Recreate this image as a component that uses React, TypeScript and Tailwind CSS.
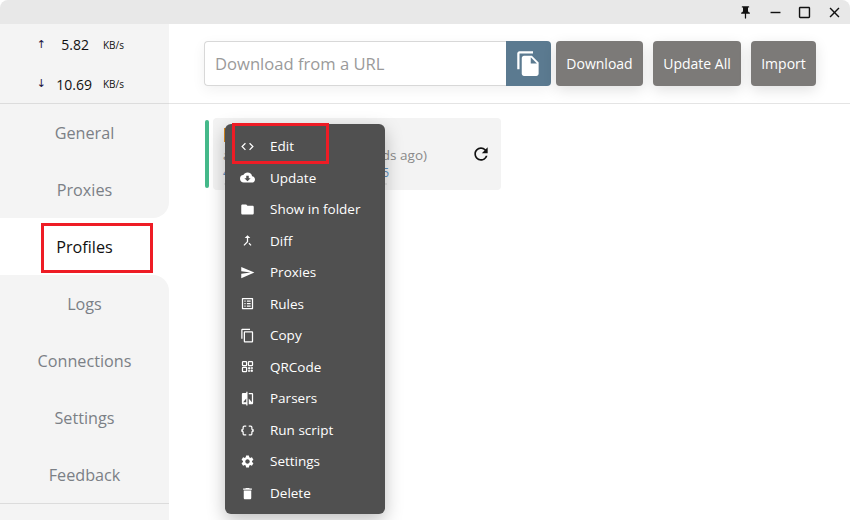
import React from 'react';
import {
  MdCode,
  MdCloudDownload,
  MdFolder,
  MdCallMerge,
  MdSend,
  MdOutlineListAlt,
  MdContentCopy,
  MdCompare,
  MdDataObject,
  MdSettings,
  MdDelete,
  MdPushPin,
  MdRefresh,
  MdFileCopy,
  MdClose,
  MdCropSquare,
  MdRemove,
} from 'react-icons/md';

const QrIcon = ({ size = 15 }: { size?: number }) => (
  <svg width={size} height={size} viewBox="0 0 24 24" fill="none" stroke="currentColor" strokeWidth="2">
    <rect x="4" y="4" width="6.5" height="6.5" rx="1" />
    <rect x="13.5" y="4" width="6.5" height="6.5" rx="1" />
    <rect x="4" y="13.5" width="6.5" height="6.5" rx="1" />
    <path d="M13.5 13.5h2.5v2.5h-2.5zM18 13.5h2v2h-2zM13.5 18h2v2h-2zM17.5 17.5h2.5v2.5h-2.5z" strokeWidth="1" fill="currentColor" />
  </svg>
);

const menuItems = [
  { label: 'Edit', icon: MdCode },
  { label: 'Update', icon: MdCloudDownload },
  { label: 'Show in folder', icon: MdFolder },
  { label: 'Diff', icon: MdCallMerge },
  { label: 'Proxies', icon: MdSend },
  { label: 'Rules', icon: MdOutlineListAlt },
  { label: 'Copy', icon: MdContentCopy },
  { label: 'QRCode', icon: QrIcon },
  { label: 'Parsers', icon: MdCompare },
  { label: 'Run script', icon: MdDataObject },
  { label: 'Settings', icon: MdSettings },
  { label: 'Delete', icon: MdDelete },
];

const navItems = ['General', 'Proxies', 'Profiles', 'Logs', 'Connections', 'Settings', 'Feedback'];

const Sidebar = () => (
  <aside className="flex w-[169px] shrink-0 flex-col bg-white">
    <div className="flex h-[80px] flex-col border-b border-[#dcdcdc] bg-[#f4f4f4] text-[#111]">
      <div className="flex h-[40px] items-center pt-[2px]">
        <span className="w-[46px] text-right font-['DejaVu_Sans'] text-[11px] text-[#1a1440]">↑</span>
        <span className="w-[43px] text-right text-[14px]">5.82</span>
        <span className="ml-[14px] pt-[1px] text-[10px]">KB/s</span>
      </div>
      <div className="flex h-[40px] items-center pt-[2px]">
        <span className="w-[46px] text-right font-['DejaVu_Sans'] text-[11px] text-[#1a1440]">↓</span>
        <span className="w-[46px] text-right text-[14px]">10.69</span>
        <span className="ml-[11px] pt-[1px] text-[10px]">KB/s</span>
      </div>
    </div>
    <nav className="flex flex-col">
      {navItems.map((item) => {
        const active = item === 'Profiles';
        return (
          <div
            key={item}
            className={`flex h-[57px] items-center justify-center pt-[1px] text-[16.2px] ${
              active ? 'bg-white text-[#111]' : 'bg-[#f4f4f4] text-[#7b8086]'
            } ${item === 'Proxies' ? 'rounded-br-2xl' : ''} ${item === 'Logs' ? 'rounded-tr-2xl' : ''}`}
          >
            {item}
          </div>
        );
      })}
    </nav>
    <div className="flex-1 border-t border-[#dcdcdc] bg-[#f4f4f4]" />
  </aside>
);

const Toolbar = () => (
  <div className="flex h-[80px] items-start border-b border-[#e4e4e4] pl-[35px] pt-[17px]">
    <div className="flex h-[45px] w-[347px] rounded shadow-[0_4px_14px_rgba(0,0,0,0.06)]">
      <div className="flex flex-1 items-center rounded-l border border-r-0 border-[#d8d8d8] pl-[10px] pt-[1px] text-[16.6px] text-[#9a9a9a]">
        Download from a URL
      </div>
      <div className="flex w-[45px] items-center justify-center rounded-r bg-[#5b7a90] text-white">
        <MdFileCopy size={27} />
      </div>
    </div>
    {[
      { label: 'Download', w: 'w-[87px]', ml: 'ml-[5px]' },
      { label: 'Update All', w: 'w-[88px]', ml: 'ml-[10px]' },
      { label: 'Import', w: 'w-[65px]', ml: 'ml-[10px]' },
    ].map((b) => (
      <div
        key={b.label}
        className={`flex h-[45px] items-center justify-center rounded bg-[#7c7a78] text-[14px] text-white shadow-[0_4px_14px_rgba(0,0,0,0.12)] ${b.w} ${b.ml}`}
      >
        {b.label}
      </div>
    ))}
  </div>
);

const ProfileCard = () => (
  <div className="flex pl-[36px] pt-[14px]">
    <div className="mt-[2px] h-[68px] w-[4px] rounded-sm bg-[#45b98a]" />
    <div className="relative ml-[4px] h-[72px] w-[288px] rounded bg-[#f3f3f3]">
      <div className="ml-[11px] mt-[10px] h-[14px] w-[8px] bg-[#d98a1f]" />
      <div className="ml-[10px] mt-[3px] flex w-[204px] justify-between whitespace-nowrap text-[13.5px] text-[#8a8a8a]">
        <span>a</span>
        <span>(10 seconds ago)</span>
      </div>
      <div className="ml-[10px] flex w-[166px] justify-between whitespace-nowrap text-[12px] leading-[16px] text-[#5b8fc0]">
        <span>4</span>
        <span>2025</span>
      </div>
      <div className="ml-[11px] mt-[2px] h-[2px] w-[163px] bg-[#e2e2e2]" />
      <MdRefresh size={20} className="absolute left-[258px] top-[26px] text-[#111]" />
    </div>
  </div>
);

const ContextMenu = () => (
  <div className="absolute left-[225px] top-[124px] w-[160px] rounded-md bg-[#505050] pb-[5px] pt-[6.36px] text-white shadow-[0_6px_18px_rgba(0,0,0,0.25)]">
    {menuItems.map(({ label, icon: Icon }) => (
      <div key={label} className="flex h-[31.55px] items-center pl-[15px] text-[13.5px]">
        <span className="flex w-[15px] justify-center">
          <Icon size={15} />
        </span>
        <span className="ml-[15px]">{label}</span>
      </div>
    ))}
  </div>
);

export default function App() {
  return (
    <div
      className="relative h-[520px] w-[850px] overflow-hidden bg-white"
      style={{ fontFamily: '"Open Sans", "Noto Sans", sans-serif' }}
    >
      <div className="flex h-[24px] items-center justify-end rounded-t-lg bg-[#e8e8e8] text-[#111]">
        <MdPushPin size={15} className="mr-[14px]" />
        <MdRemove size={17} className="mr-[12px]" />
        <MdCropSquare size={17} className="mr-[13px]" />
        <MdClose size={17} className="mr-[7px]" />
      </div>
      <div className="flex h-[496px]">
        <Sidebar />
        <main className="flex-1">
          <Toolbar />
          <ProfileCard />
        </main>
      </div>
      <ContextMenu />
      <div className="absolute left-[232px] top-[123px] h-[41px] w-[97px] border-[3px] border-[#ee1c25]" />
      <div className="absolute left-[41px] top-[223px] h-[50px] w-[112px] border-[3px] border-[#ee1c25]" />
    </div>
  );
}
